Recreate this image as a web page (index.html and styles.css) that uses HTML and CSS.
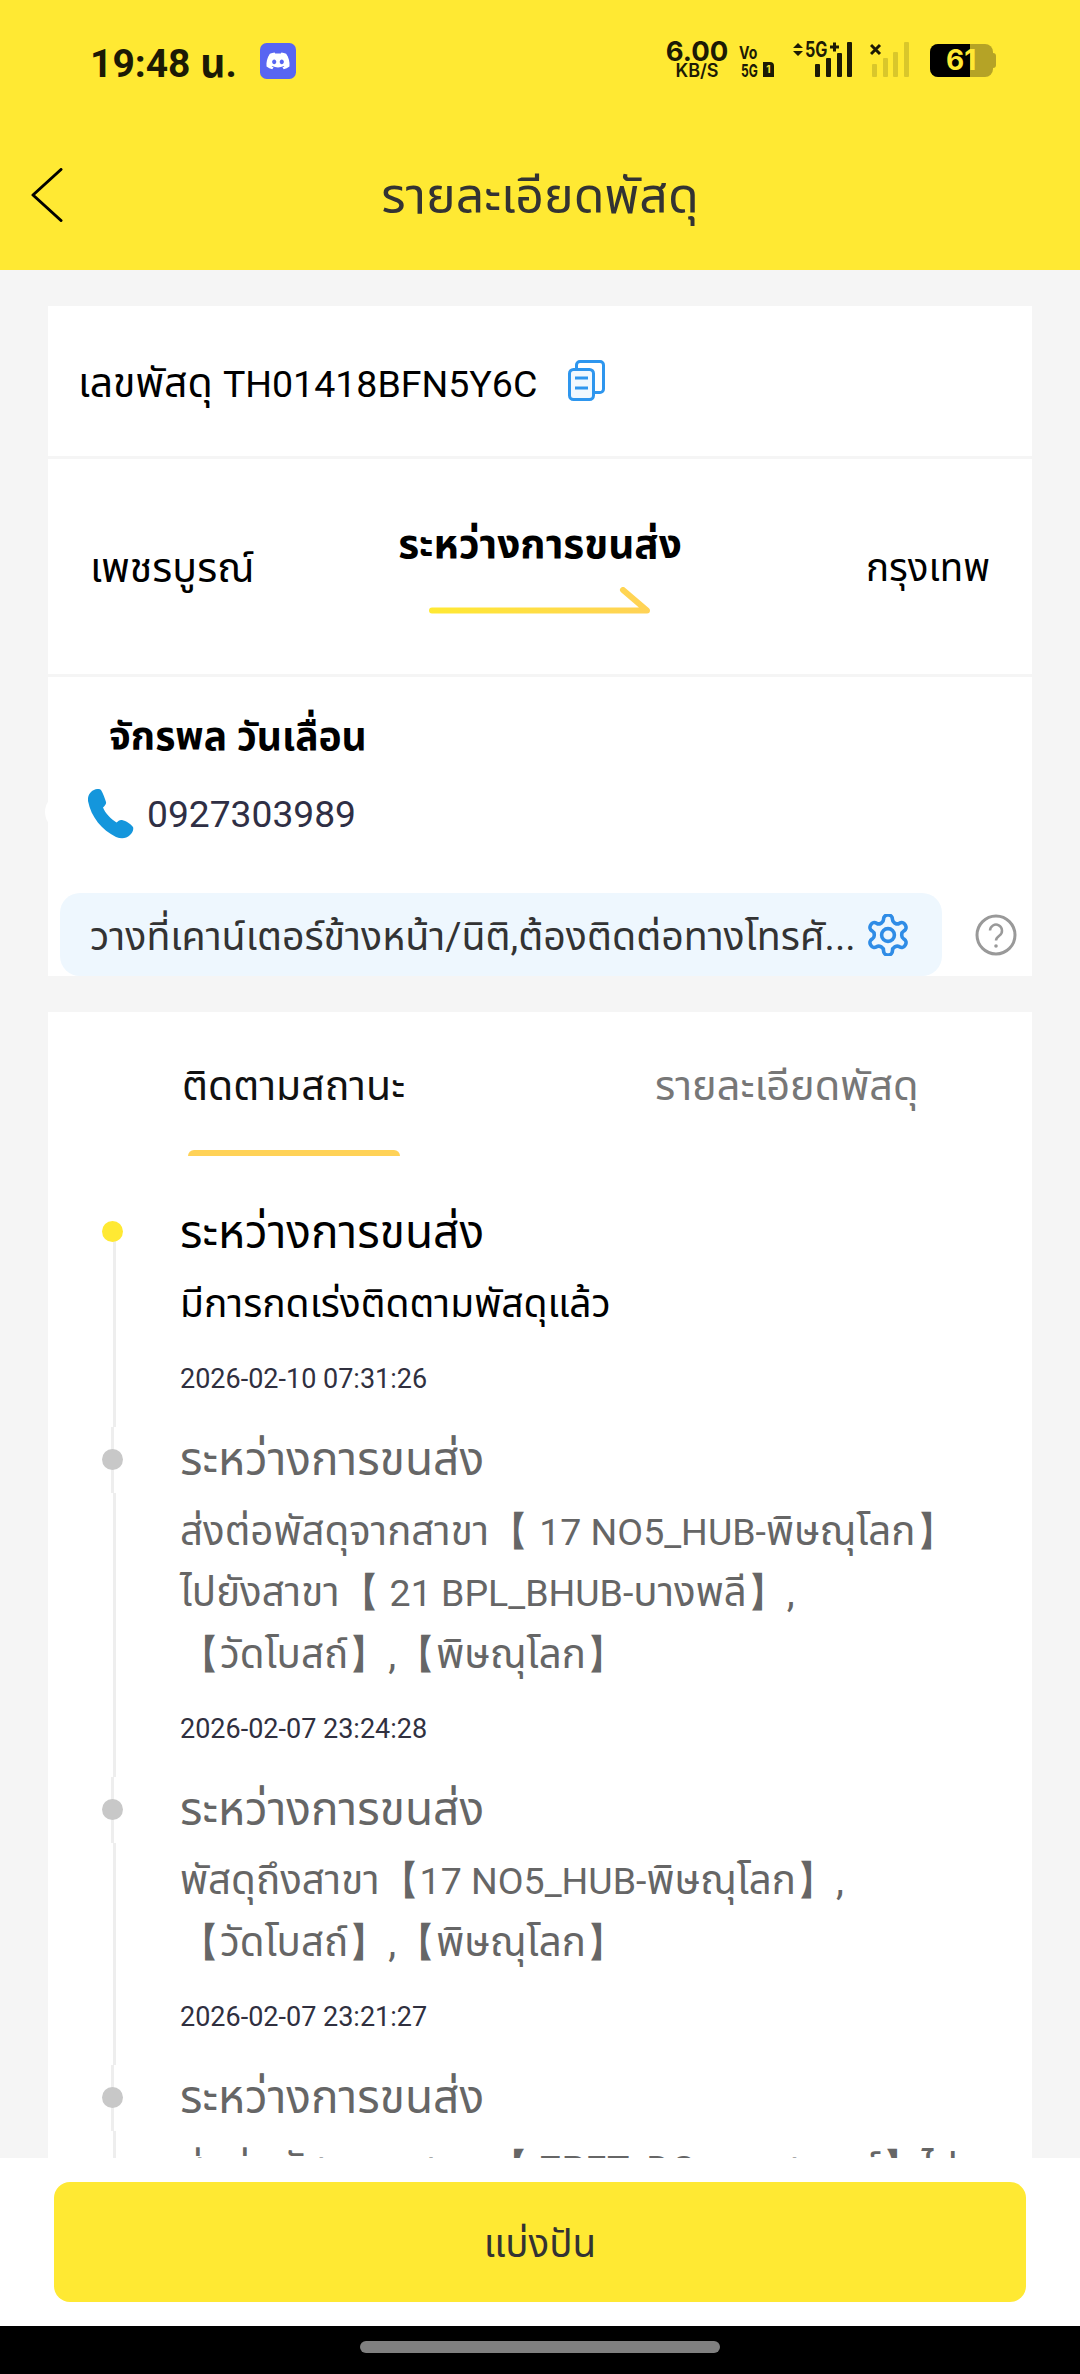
FILE: index.html
```html
<!DOCTYPE html>
<html lang="th">
<head>
<meta charset="utf-8">
<title>รายละเอียดพัสดุ</title>
<link rel="stylesheet" href="styles.css">
</head>
<body>
<div class="page">
  <header class="top">
    <div class="status">
      <span class="time">19:48 น.</span>
      <svg class="discord" viewBox="0 0 38 38"><rect width="38" height="38" rx="7" fill="#5865F2"/><path d="M27.6 11.4a20 20 0 0 0-5-1.5l-.6 1.3a19 19 0 0 0-5.900 0l-.7-1.300a20 20 0 0 0-5 1.500C7.300 16 6.500 20.400 6.900 24.800a20 20 0 0 0 6.100 3l1.300-2.100-2-1 .5-.4a14.500 14.500 0 0 0 12.400 0l.5.4-2 1 1.300 2.100a20 20 0 0 0 6.100-3c.5-5.100-.8-9.500-3.500-13.400ZM15 22.300c-1.200 0-2.200-1.100-2.200-2.500s1-2.500 2.200-2.500 2.200 1.100 2.200 2.500-1 2.500-2.200 2.500Zm8 0c-1.200 0-2.200-1.100-2.200-2.500s1-2.500 2.200-2.500 2.200 1.100 2.200 2.500-1 2.500-2.200 2.500Z" fill="#fff"/></svg>
      <span class="grow"></span>
      <span class="speed"><b>6.00</b><i>KB/S</i></span>
      <span class="volte"><span class="vo">Vo</span><span class="vg">5G</span><span class="sim">1</span></span>
      <span class="sig1">
        <svg class="sig1-bars" viewBox="0 0 62 36"><path d="M1 6l5-5 5 5ZM1 9l5 5 5-5Z" fill="#1c1a05"/><path d="M38 5h9M42.500 0.500v9" stroke="#1c1a05" stroke-width="3"/><rect x="23" y="22" width="5" height="13" rx="1" fill="#1c1a05"/><rect x="34" y="16" width="5" height="19" rx="1" fill="#1c1a05"/><rect x="45" y="11" width="5" height="24" rx="1" fill="#1c1a05"/><rect x="55" y="0" width="5" height="35" rx="1" fill="#1c1a05"/></svg>
        <span class="g5">5G</span>
      </span>
      <svg class="sig2" viewBox="0 0 40 36"><path d="M1 3l9 9M10 3l-9 9" stroke="#1c1a05" stroke-width="3"/><g fill="#1c1a05" opacity=".16"><rect x="2" y="22" width="5" height="13" rx="1"/><rect x="13" y="16" width="5" height="19" rx="1"/><rect x="23" y="10" width="5" height="25" rx="1"/><rect x="34" y="0" width="5" height="35" rx="1"/></g></svg>
      <span class="battery"><span class="batfill"></span><span class="batnum">61</span></span>
    </div>
    <div class="navbar">
      <svg class="back" viewBox="0 0 32 54"><path d="M30 1.500 2 27l28 25.500" fill="none" stroke="#000" stroke-width="3" stroke-linecap="round" stroke-linejoin="round"/></svg>
      <h1 class="title">รายละเอียดพัสดุ</h1>
    </div>
  </header>

  <main class="main">
    <section class="card row-no">
      <span class="no">เลขพัสดุ <span class="lat">TH01418BFN5Y6C</span></span>
      <svg class="copy" viewBox="0 0 38 42"><path d="M9.500 8V5A3.500 3.500 0 0 1 13 1.500h20A3.500 3.500 0 0 1 36.500 5v24a3.500 3.500 0 0 1-3.500 3.500h-5" fill="none" stroke="#2E96EE" stroke-width="3"/><rect x="2.500" y="9.500" width="24" height="30" rx="4" fill="#F1F8FE" stroke="#2E96EE" stroke-width="3"/><path d="M8 18h13M8 28h13" stroke="#2E96EE" stroke-width="3"/></svg>
    </section>

    <section class="card route">
      <span class="city">เพชรบูรณ์</span>
      <div class="route-mid">
        <strong class="route-state">ระหว่างการขนส่ง</strong>
        <svg class="route-arrow" viewBox="0 0 222 28"><defs><linearGradient id="arrowGrad" gradientUnits="userSpaceOnUse" x1="0" x2="222" y1="0" y2="0"><stop offset="0" stop-color="#FFE933"/><stop offset="1" stop-color="#FFD257"/></linearGradient></defs><path d="M3 23.500h215L194 3" fill="none" stroke="url(#arrowGrad)" stroke-width="6" stroke-linecap="round" stroke-linejoin="round"/></svg>
      </div>
      <span class="city city-end">กรุงเทพ</span>
    </section>

    <section class="card recipient">
      <div class="name">จักรพล วันเลื่อน</div>
      <div class="phone">
        <svg class="phone-ico" viewBox="0 0 46 50"><path d="M3 3C6 0 11-1 13 1c2 3 4 9 5 12 .5 2-1.500 4-3 5.500 2 5.500 8 11.500 13.500 15 1.500-1.500 3.500-3 5.500-2.500 4 1 9 4 11 7 1 3-1 6-3 8-4 4-9 4-14 2C14 41 3 28 0 12-.5 8 1 5 3 3Z" fill="#1496DC"/></svg>
        <span class="phone-no">0927303989</span>
      </div>
      <div class="note-row">
        <div class="note">
          <span class="note-text">วางที่เคาน์เตอร์ข้างหน้า/นิติ,ต้องติดต่อทางโทรศั...</span>
          <svg class="gear" viewBox="1.500 1.500 21 21"><path d="M12.220 2h-.44a2 2 0 0 0-2 2v.18a2 2 0 0 1-1 1.730l-.43.25a2 2 0 0 1-2 0l-.15-.08a2 2 0 0 0-2.730.73l-.22.38a2 2 0 0 0 .73 2.730l.15.1a2 2 0 0 1 1 1.720v.51a2 2 0 0 1-1 1.740l-.15.09a2 2 0 0 0-.73 2.730l.22.38a2 2 0 0 0 2.730.73l.15-.08a2 2 0 0 1 2 0l.43.25a2 2 0 0 1 1 1.730V20a2 2 0 0 0 2 2h.44a2 2 0 0 0 2-2v-.18a2 2 0 0 1 1-1.730l.43-.25a2 2 0 0 1 2 0l.15.08a2 2 0 0 0 2.730-.73l.22-.39a2 2 0 0 0-.73-2.730l-.15-.08a2 2 0 0 1-1-1.740v-.5a2 2 0 0 1 1-1.740l.15-.09a2 2 0 0 0 .73-2.730l-.22-.38a2 2 0 0 0-2.730-.73l-.15.08a2 2 0 0 1-2 0l-.43-.25a2 2 0 0 1-1-1.730V4a2 2 0 0 0-2-2Z" fill="none" stroke="#2F8CE6" stroke-width="1.800" stroke-linejoin="round"/><circle cx="12" cy="12" r="3.200" fill="none" stroke="#2F8CE6" stroke-width="1.800"/></svg>
        </div>
        <svg class="help" viewBox="0 0 42 42"><circle cx="21" cy="21" r="19" fill="none" stroke="#999" stroke-width="3"/><path d="M15 16.500a6 6 0 1 1 9.500 5c-2 1.500-3.500 2.500-3.500 5" fill="none" stroke="#999" stroke-width="2.500"/><circle cx="21" cy="32" r="1.800" fill="#999"/></svg>
      </div>
    </section>

    <section class="card track">
      <div class="tabs">
        <div class="tab tab-on">ติดตามสถานะ</div>
        <div class="tab">รายละเอียดพัสดุ</div>
      </div>
      <ol class="timeline">
        <li class="step step-on">
          <div class="step-title">ระหว่างการขนส่ง</div>
          <div class="step-body">มีการกดเร่งติดตามพัสดุแล้ว</div>
          <div class="step-date">2026-02-10 07:31:26</div>
        </li>
        <li class="step">
          <div class="step-title">ระหว่างการขนส่ง</div>
          <div class="step-body">ส่งต่อพัสดุจากสาขา【 <span class="lat">17 NO5_HUB-</span>พิษณุโลก】<br>ไปยังสาขา【 <span class="lat">21 BPL_BHUB-</span>บางพลี】,<br>【วัดโบสถ์】,【พิษณุโลก】</div>
          <div class="step-date">2026-02-07 23:24:28</div>
        </li>
        <li class="step">
          <div class="step-title">ระหว่างการขนส่ง</div>
          <div class="step-body">พัสดุถึงสาขา【<span class="lat">17 NO5_HUB-</span>พิษณุโลก】,<br>【วัดโบสถ์】,【พิษณุโลก】</div>
          <div class="step-date">2026-02-07 23:21:27</div>
        </li>
        <li class="step">
          <div class="step-title">ระหว่างการขนส่ง</div>
          <div class="step-body nowrap">ส่งต่อพัสดุจากสาขา【 <span class="lat">ZPET_DC-</span>นครสวรรค์】ไป</div>
        </li>
      </ol>
    </section>
  </main>

  <footer class="foot">
    <button class="share">แบ่งปัน</button>
  </footer>
  <div class="gesture"><span class="pill"></span></div>
</div>
</body>
</html>
```

FILE: styles.css
```css
* { box-sizing: border-box; }
html, body { margin: 0; padding: 0; }
body { font-family: Roboto, "Noto Sans Thai", sans-serif; background: #f5f5f5; color: #000; }
.page { width: 1080px; height: 2374px; display: flex; flex-direction: column; overflow: hidden; }
.lat { font-size: 37.500px; line-height: 1; }

.top { height: 270px; flex: none; background: #FFE933; }
.status { height: 120px; display: flex; align-items: flex-start; padding: 42px 87px 0 90px; color: #1c1a05; }
.time { font-size: 39px; font-weight: 700; line-height: 44px; }
.discord { width: 36px; height: 36px; margin: 1px 0 0 23px; }
.grow { flex: 1; }
.speed { display: flex; flex-direction: column; align-items: center; width: 60px; margin-top: -3px; font-family: Inter, Roboto, sans-serif; }
.speed b { font-size: 27.500px; line-height: 25px; font-weight: 700; }
.speed i { font-style: normal; font-size: 18px; line-height: 13px; font-weight: 600; }
.volte { position: relative; display: flex; flex-direction: column; width: 36px; height: 36px; margin-left: 12px; padding-top: 2px; font: 700 18px/17px Inter, Roboto, sans-serif; }
.vo { transform: scaleX(.78); transform-origin: left; }
.vg { margin: 1px 0 0 2px; transform: scaleX(.67); transform-origin: left; }
.sim { position: absolute; left: 24px; top: 20px; width: 11px; height: 15px; background: #1c1a05; color: #FFE933; font-size: 10px; line-height: 15px; text-align: center; border-radius: 0 4px 0 0; }
.sig1 { position: relative; width: 62px; height: 36px; margin-left: 17px; }
.sig1-bars { display: block; width: 62px; height: 36px; }
.g5 { position: absolute; left: 13px; top: -1px; font: 700 21px/18px Inter, Roboto, sans-serif; transform: scaleX(.77); transform-origin: left; }
.sig2 { width: 40px; height: 36px; margin-left: 16px; }
.battery { position: relative; width: 63px; height: 33px; margin: 2px 0 0 20px; background: #b5a326; border-radius: 8px; }
.battery::after { content: ""; position: absolute; right: -3px; top: 9px; width: 3px; height: 15px; background: #b5a326; border-radius: 0 3px 3px 0; }
.batfill { display: block; width: 40px; height: 100%; background: #000; border-radius: 8px 0 0 8px; }
.batnum { position: absolute; left: 16px; top: 0; color: #FFE933; font: 700 28px/33px Inter, Roboto, sans-serif; }

.navbar { height: 150px; position: relative; display: flex; align-items: center; justify-content: center; padding-top: 2px; }
.back { position: absolute; left: 31px; top: 48px; width: 32px; height: 54px; }
.title { margin: 0; font-size: 50px; line-height: 60px; font-weight: 400; color: #333; }

.main { flex: 1; min-height: 0; overflow: hidden; padding: 36px 48px 0; }
.card { background: #fff; }
.row-no { height: 150px; display: flex; align-items: center; padding: 3px 0 0 30px; }
.no { font-size: 41px; line-height: 50px; }
.copy { width: 38px; height: 42px; margin: -3px 0 0 30px; }

.route { margin-top: 3px; height: 215px; display: grid; grid-template-columns: 1fr auto 1fr; align-items: start; padding: 0 42px; }
.city { font-size: 41px; line-height: 56px; padding-top: 81px; }
.city-end { justify-self: end; font-size: 38.500px; }
.route-mid { display: flex; flex-direction: column; align-items: center; gap: 18px; padding-top: 60px; }
.route-state { font-size: 40.500px; line-height: 50px; font-weight: 700; }
.route-arrow { width: 222px; height: 28px; }

.recipient { position: relative; margin-top: 3px; height: 299px; display: flex; flex-direction: column; }
.recipient::before { content: ""; position: absolute; left: -3px; top: 118px; width: 30px; height: 34px; border-radius: 50%; background: #fff; }
.name { font-size: 39px; line-height: 50px; font-weight: 700; padding: 35px 0 0 61px; }
.phone { position: relative; display: flex; align-items: center; margin: 27px 0 0 40px; }
.phone-ico { width: 46px; height: 50px; }
.phone-no { margin-left: 13px; font-size: 37.200px; line-height: 50px; color: #2f2f45; }
.note-row { margin-top: auto; display: flex; align-items: center; padding-left: 12px; }
.note { width: 882px; height: 83px; display: flex; align-items: center; padding: 0 33px 0 30px; background: #EEF7FE; border-radius: 20px; }
.note-text { font-size: 39.300px; line-height: 50px; padding-top: 4px; color: #333; white-space: nowrap; flex: 1; }
.gear { width: 42px; height: 42px; flex: none; }
.help { width: 42px; height: 42px; margin-left: 33px; }

.track { margin-top: 36px; }
.tabs { display: grid; grid-template-columns: 506px 1fr; height: 144px; }
.tab { padding: 46px 0 0 101px; font-size: 41.500px; line-height: 56px; color: #777; position: relative; }
.tab-on { padding-left: 134px; font-size: 41px; color: #111; }
.tab-on::after { content: ""; position: absolute; left: 140px; width: 212px; top: 138px; height: 6px; background: #FFD257; border-radius: 6px 6px 0 0; }

.timeline { list-style: none; margin: 0; padding: 43px 0 0 54px; }
.step { position: relative; color: #666; padding: 0 0 27.500px 78px; background: linear-gradient(#eee, #eee) 9px 0 / 3px 66px no-repeat; }
.step::before { content: ""; position: absolute; left: 11px; top: 66px; bottom: 0; width: 3px; background: #eee; }
.step::after { content: ""; position: absolute; left: 0; top: 22px; width: 21px; height: 21px; border-radius: 50%; background: #c8c8c8; }
.step-on { color: #000; padding-top: 1px; padding-bottom: 28px; background: none; }
.step-on::before { top: 42px; }
.step-on::after { background: #FFE933; }
.step-title { font-size: 46px; line-height: 64px; }
.step-body { margin-top: 9.500px; font-size: 40.300px; line-height: 61.500px; }
.step-on .step-body { font-size: 39px; }
.nowrap { white-space: nowrap; }
.step-date { margin-top: 24px; font-size: 27px; line-height: 40px; color: #30303f; }

.foot { height: 168px; flex: none; background: #fff; padding: 24px 54px; }
.share { display: block; width: 972px; height: 120px; padding: 6px 0 0; border: 0; border-radius: 16px; background: #FFE933; font: 400 38.500px Roboto, "Noto Sans Thai", sans-serif; color: #333; }
.gesture { height: 48px; flex: none; background: #000; display: flex; justify-content: center; padding-top: 15px; }
.pill { width: 360px; height: 12px; border-radius: 6px; background: #808080; }
```
